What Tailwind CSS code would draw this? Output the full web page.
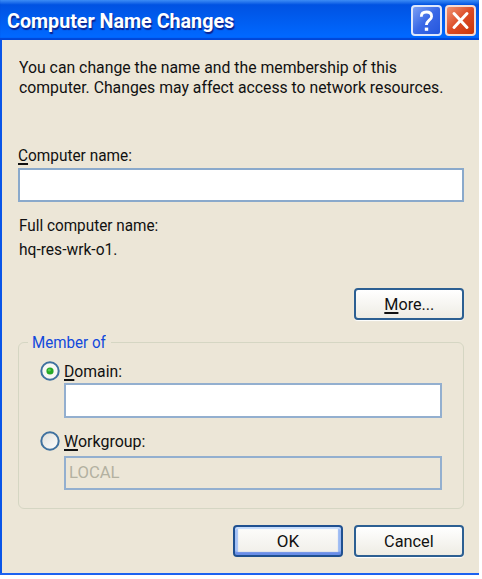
<!DOCTYPE html>
<html lang="en">
<head>
<meta charset="utf-8">
<title>Computer Name Changes</title>
<script src="https://cdn.jsdelivr.net/npm/@tailwindcss/browser@4"></script>
</head>
<body class="h-[579px] w-[482px] overflow-hidden bg-white font-['Roboto',sans-serif] text-[17px] leading-5 text-[#111]">
<div class="flex h-[575px] w-[479px] flex-col border-b-2 border-[#1c62f0] bg-[#ece6d7]">
  <header class="flex h-10 shrink-0 items-center justify-between bg-linear-to-b from-[#3c8cf5] from-0% via-[#0052e2] via-12% to-[#0068ff] to-90% pl-[7px] pr-[3px] shadow-[inset_0_-2px_1px_#0046d8]">
    <h1 class="whitespace-nowrap pt-0.5 text-[20px] font-bold text-white [text-shadow:1px_2px_1px_#0a2290]"><span class="inline-block origin-left scale-x-[0.985]">Computer Name Changes</span></h1>
    <div class="flex gap-[3px]">
      <button class="flex h-[31px] w-[31px] items-center justify-center rounded-[4px] border-2 border-[#dfe8fb] bg-linear-to-br from-[#7c9ff4] via-[#3a68e6] to-[#2457de]" aria-label="Help">
        <svg width="27" height="27" viewBox="0 0 27 27" fill="none" stroke="#fff" stroke-width="2.8"><path d="M8.3 9.8C8.3 6.3 10.3 5 13.4 5s5.2 1.5 5.2 4.4c0 3.8-5.2 3.9-5.2 8.6"/><path d="M11.8 20.6h3.4v3.2h-3.4z" fill="#fff" stroke="none"/></svg>
      </button>
      <button class="flex h-[31px] w-[31px] items-center justify-center rounded-[4px] border-2 border-[#f5dcd5] bg-linear-to-br from-[#ee9272] via-[#dc4a24] to-[#c83508]" aria-label="Close">
        <svg width="27" height="27" viewBox="0 0 27 27" fill="none" stroke="#fff" stroke-width="3" stroke-linecap="round"><path d="M7 6.5l13 14M20 6.5L7 20.5"/></svg>
      </button>
    </div>
  </header>
  <main class="flex flex-1 flex-col border-l-2 border-[#0a55e8] pl-4 pr-[15px] pt-[17px]">
    <p class="whitespace-nowrap pl-px"><span class="inline-block origin-left scale-x-[0.929]">You can change the name and the membership of this</span><br><span class="inline-block w-[445px] origin-left scale-x-[0.928]">computer. Changes may affect access to network resources.</span></p>
    <label class="mt-12 block h-5"><span class="inline-block origin-left scale-x-[0.905]"><u class="decoration-[1.5px] underline-offset-2">C</u>omputer name:</span></label>
    <div class="mt-[3px] h-[34px] w-[446px] border-2 border-[#8aa9cb] bg-white"></div>
    <p class="mt-[13px] h-6 pl-px"><span class="inline-block origin-left scale-x-[0.9]">Full computer name:</span></p>
    <p class="h-6 pl-px"><span class="inline-block origin-left scale-x-[0.916]">hq-res-wrk-o1.</span></p>
    <button class="mt-[25px] h-8 w-[110px] self-end rounded-[4px] border-2 border-[#2c5f92] bg-linear-to-b from-white to-[#eeece4] shadow-[0_1px_1px_#fff]"><span class="inline-block scale-x-[0.95]"><u class="decoration-[1.5px] underline-offset-2">M</u>ore...</span></button>
    <fieldset class="mt-[12px] h-[177px] rounded-[6px] border-[1.5px] border-[#d5d6c3] pl-[21px]">
      <legend class="-ml-[12px] h-5 w-[83px] px-1 text-[#1149dc]"><span class="inline-block origin-left scale-x-[0.89] whitespace-nowrap">Member of</span></legend>
      <label class="mt-[9px] flex h-5 items-center gap-1">
        <svg width="20" height="20" viewBox="0 0 20 20"><circle cx="10" cy="10" r="8.7" fill="#f8f8f4" stroke="#3f719f" stroke-width="2"/><circle cx="10" cy="10" r="3.6" fill="#27a827"/><circle cx="9.3" cy="9.2" r="1.4" fill="#55cf52"/></svg>
        <span class="inline-block origin-left scale-x-[0.925]"><u class="decoration-[1.5px] underline-offset-2">D</u>omain:</span>
      </label>
      <div class="ml-6 mt-[2px] h-[35px] w-[378px] border-2 border-[#93afcf] bg-white"></div>
      <label class="mt-[13px] flex h-5 items-center gap-1">
        <svg width="20" height="20" viewBox="0 0 20 20"><defs><linearGradient id="radio" x1="0" y1="0" x2="1" y2="1"><stop offset="0" stop-color="#deded8"/><stop offset="1" stop-color="#fff"/></linearGradient></defs><circle cx="10" cy="10" r="8.7" fill="url(#radio)" stroke="#3f719f" stroke-width="2"/></svg>
        <span class="inline-block origin-left scale-x-[0.94]"><u class="decoration-[1.5px] underline-offset-2 [text-decoration-skip-ink:none]">W</u>orkgroup:</span>
      </label>
      <div class="ml-6 mt-[5px] flex h-[34px] w-[378px] border-2 border-[#93afcf] pl-[3px] pt-1 text-[#b3b1a1]"><span class="inline-block origin-left scale-x-[0.98]">LOCAL</span></div>
    </fieldset>
    <div class="mt-4 flex justify-end gap-[11px]">
      <button class="h-8 w-[110px] rounded-[4px] border-2 border-[#1f5090] bg-linear-to-b from-[#fdfdfb] to-[#f0eee8] shadow-[inset_0_2px_1px_#c5dbfb,inset_0_-3px_1px_#6a8ee8,inset_3px_0_1px_#a5c2f6,inset_-3px_0_1px_#9bbaf3]">OK</button>
      <button class="h-8 w-[110px] rounded-[4px] border-2 border-[#2c5f92] bg-linear-to-b from-white to-[#eeece4] shadow-[0_1px_1px_#fff]"><span class="inline-block scale-x-[0.96]">Cancel</span></button>
    </div>
  </main>
</div>
</body>
</html>
